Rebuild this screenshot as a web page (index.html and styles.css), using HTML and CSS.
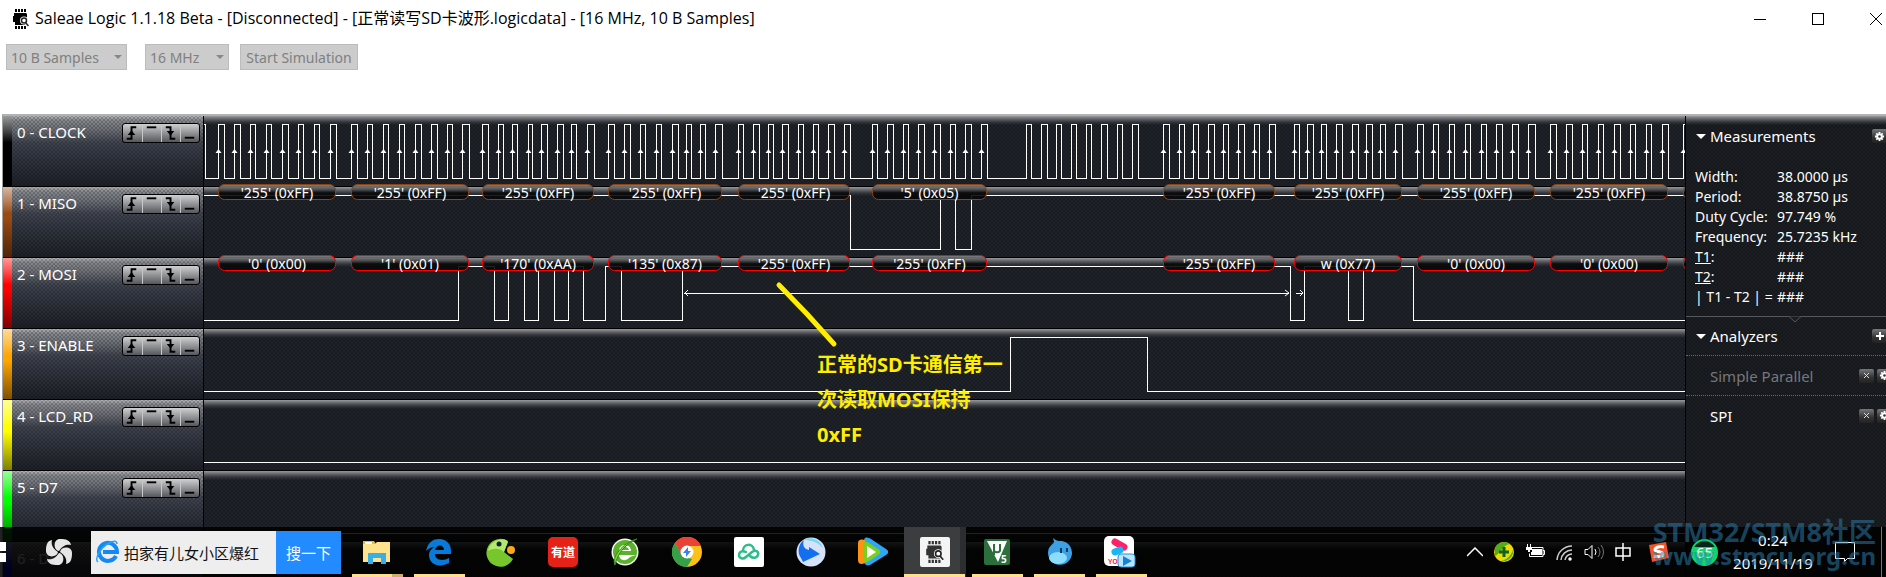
FILE: index.html
```html
<!DOCTYPE html>
<html lang="zh-CN">
<head>
  <meta charset="UTF-8">
  <title>Saleae Logic 1.1.18 Beta</title>
  <meta name="viewport" content="width=device-width, initial-scale=1.0">
  <link rel="stylesheet" href="styles.css">
</head>
<body>

<!-- shared icons -->
<svg class="defs" width="0" height="0" aria-hidden="true">
  <defs>
    <linearGradient id="pill" x1="0" y1="0" x2="0" y2="1">
      <stop offset="0" stop-color="#8c8c8e"/>
      <stop offset="0.35" stop-color="#48484a"/>
      <stop offset="0.55" stop-color="#08080a"/>
      <stop offset="1" stop-color="#08080a"/>
    </linearGradient>
    <symbol id="chip" viewBox="0 0 16 20">
      <path d="M2 0h2v3H2zM5 0h2v3H5zM8 0h2v3H8zM11 0h2v3h-2zM2 17h2v3H2zM5 17h2v3H5zM8 17h2v3H8zM11 17h2v3h-2zM1 4h12l1 1v11H2v-3H0V7h1z"/>
      <circle cx="11" cy="11.500" r="4" fill="#fff"/>
      <path d="M12 13l4 5" stroke="#fff" stroke-width="3"/>
      <circle cx="11" cy="11.500" r="2.500" fill="none" stroke="#222" stroke-width="1.500"/>
      <path d="M12.500 13.500l3 3.500" stroke="#222" stroke-width="1.500"/>
    </symbol>
    <symbol id="gear" viewBox="0 0 12 12">
      <path d="M6 1v10M1 6h10M2.500 2.500l7 7M9.500 2.500l-7 7" stroke="#fff" stroke-width="2"/>
      <circle cx="6" cy="6" r="3.400" fill="#fff"/>
      <circle cx="6" cy="6" r="1.400" fill="#333"/>
    </symbol>
    <symbol id="rise" viewBox="0 0 19 18">
      <path d="M4 15h5V3h5" fill="none" stroke="#000" stroke-width="2"/>
      <path d="M9 6l4 5H5z"/>
    </symbol>
    <symbol id="high" viewBox="0 0 19 18"><path d="M4 3h10" stroke="#000" stroke-width="2"/></symbol>
    <symbol id="fall" viewBox="0 0 19 18">
      <path d="M4 3h5v12h5" fill="none" stroke="#000" stroke-width="2"/>
      <path d="M9 12l4-5H5z"/>
    </symbol>
    <symbol id="low" viewBox="0 0 19 18"><path d="M4 14h10" stroke="#000" stroke-width="2"/></symbol>
  </defs>
</svg>

<header class="titlebar">
  <svg class="app-icon" width="16" height="20"><use href="#chip"/></svg>
  <h1>Saleae Logic 1.1.18 Beta - [Disconnected] - [正常读写SD卡波形.logicdata] - [16 MHz, 10 B Samples]</h1>
  <div class="window-buttons">
    <button aria-label="Minimize"><svg width="12" height="12"><path d="M0 6.500h12" stroke="#000"/></svg></button>
    <button aria-label="Maximize"><svg width="12" height="12"><rect x=".5" y=".5" width="11" height="11" fill="none" stroke="#000"/></svg></button>
    <button aria-label="Close"><svg width="12" height="12"><path d="M0 0l12 12M12 0L0 12" stroke="#000"/></svg></button>
  </div>
</header>

<div class="toolbar">
  <div class="pick samples">
    <select aria-label="Samples" disabled><option>10 B Samples</option></select>
  </div>
  <div class="pick rate">
    <select aria-label="Sample rate" disabled><option>16 MHz</option></select>
  </div>
  <button class="start" disabled>Start Simulation</button>
</div>

<main class="board">
  <div class="channels" id="channels"></div>

  <aside class="sidebar">
    <section class="measurements">
      <div class="panel-head">
        <h2>Measurements</h2>
        <button class="mini" aria-label="Measurement settings"><svg width="11" height="11"><use href="#gear"/></svg></button>
      </div>
      <table>
        <tr><th>Width:</th><td>38.0000 µs</td></tr>
        <tr><th>Period:</th><td>38.8750 µs</td></tr>
        <tr><th>Duty Cycle:</th><td>97.749 %</td></tr>
        <tr><th>Frequency:</th><td>25.7235 kHz</td></tr>
        <tr><th><a href="#t1">T1</a>:</th><td>###</td></tr>
        <tr><th><a href="#t2">T2</a>:</th><td>###</td></tr>
        <tr><th>| T1 - T2 | =</th><td>###</td></tr>
      </table>
      <svg class="notch" width="12" height="7"><path d="M0 .5L6 6L12 .5" fill="#1a1d22" stroke="#55575c"/></svg>
    </section>
    <section class="analyzers">
      <div class="panel-head">
        <h2>Analyzers</h2>
        <button class="mini" aria-label="Add analyzer"><svg width="10" height="10"><path d="M5 1v8M1 5h8" stroke="#fff" stroke-width="2"/></svg></button>
      </div>
      <div class="analyzer off">
        <span>Simple Parallel</span>
        <button class="mini" aria-label="Remove Simple Parallel"><svg width="7" height="7"><path d="M1 1l5 5M6 1L1 6" stroke="#ddd"/></svg></button>
        <button class="mini" aria-label="Simple Parallel settings"><svg width="11" height="11"><use href="#gear"/></svg></button>
      </div>
      <div class="analyzer">
        <span>SPI</span>
        <button class="mini" aria-label="Remove SPI"><svg width="7" height="7"><path d="M1 1l5 5M6 1L1 6" stroke="#ddd"/></svg></button>
        <button class="mini" aria-label="SPI settings"><svg width="11" height="11"><use href="#gear"/></svg></button>
      </div>
    </section>
  </aside>

  <!-- hand-drawn note on top of the waves -->
  <svg class="pointer" width="64" height="68"><path d="M4 4L32 33L59 63" fill="none" stroke="#ffee00" stroke-width="5" stroke-linecap="round"/></svg>
  <p class="note">正常的SD卡通信第一<br>次读取MOSI保持<br>0xFF</p>
</main>

<footer class="taskbar">
  <button class="win" aria-label="Start"><svg width="6" height="20" fill="#fff"><path d="M0 0h6v9H0zM0 11h6v9H0z"/></svg></button>
  <button class="pinwheel" aria-label="Pinwheel">
    <svg width="28" height="28" viewBox="0 0 28 28">
      <g fill="#e6e6e6">
        <path id="petal" d="M14 13C8 12 8 1 15 1c6 0 10 1 11 6c-4-1-8 0-12 6z"/>
        <use href="#petal" transform="rotate(90 14 14)"/>
        <use href="#petal" transform="rotate(180 14 14)"/>
        <use href="#petal" transform="rotate(270 14 14)"/>
      </g>
    </svg>
  </button>
  <form class="search">
    <svg width="24" height="24" viewBox="0 0 24 24">
      <path d="M21 16a9 9 0 1 1 1-4H8" fill="none" stroke="#1489f5" stroke-width="4"/>
      <path d="M3 22C-1 19 6 7 14 3c4-2 8-3 8 1" fill="none" stroke="#27a3ff" stroke-width="1.500"/>
    </svg>
    <input type="text" aria-label="Search" value="拍家有儿女小区爆红">
    <button type="button">搜一下</button>
  </form>

  <nav class="tasks">
    <button class="task open stacked" aria-label="File Explorer">
      <svg width="30" height="30" viewBox="0 0 30 30">
        <path d="M1 4h11l2 3h-2H1z" fill="#f4b52c"/><path d="M3 5h7v2H3z" fill="#fff"/>
        <path d="M1 7h12l2-2h13v20H1z" fill="#ffe28c"/>
        <path d="M6 27V16h18v11h-5v-6h-8v6z" fill="#37afe8"/>
      </svg>
    </button>
    <button class="task open" aria-label="Edge">
      <svg width="30" height="30" viewBox="0 0 30 30">
        <path d="M2 14C4 5 9 2 15 2c8 0 12 6 12 12v3H11c0 7 9 7 14 4v5c-9 5-20 2-20-8c0-4 3-7 6-8c-4 0-7 2-9 4zm9-1h9c0-6-8-6-9 0z" fill="#0a7ad8"/>
      </svg>
    </button>
    <button class="task" aria-label="Game">
      <svg width="30" height="30" viewBox="0 0 30 30">
        <path d="M22 4L18 15l9 7A14 14 0 1 1 22 4z" fill="#76c62c"/>
        <path d="M20 3C12 1 3 6 2 14c5-3 12-3 16 1l4-10z" fill="#b4ea6c"/>
        <circle cx="13" cy="7" r="2.500" fill="#123"/><circle cx="25" cy="13" r="4" fill="#f7a81b"/>
      </svg>
    </button>
    <button class="task" aria-label="Youdao"><span class="youdao">有道</span></button>
    <button class="task" aria-label="360 Browser">
      <svg width="30" height="30" viewBox="0 0 30 30">
        <circle cx="15" cy="15" r="13.500" fill="#f2f8ee"/><circle cx="15" cy="15" r="12" fill="#5cb22c"/>
        <path d="M26 18H9c1 7 8 6 11 2M9 14c0-8 12-8 12 0z" fill="#fff"/><path d="M12 13c1-4 6-4 7 0z" fill="#5cb22c"/>
        <path d="M5 28C1 21 12 6 27 2C16 7 8 15 5 28z" fill="#82d446" stroke="#2f8a14"/>
      </svg>
    </button>
    <button class="task" aria-label="Chrome">
      <svg width="30" height="30" viewBox="0 0 30 30">
        <circle cx="15" cy="15" r="15" fill="#fbc116"/>
        <path d="M3 6a15 15 0 0 1 26 3H15l-6 9z" fill="#ea4335"/>
        <path d="M3 6l7 13 10 3-5 8A15 15 0 0 1 3 6z" fill="#34a04a"/>
        <circle cx="15" cy="15" r="6.500" fill="#fff"/><path d="M16 10l-5 6h3v4l5-6h-3z" fill="#3f7ef0"/>
      </svg>
    </button>
    <button class="task" aria-label="Cloud">
      <svg width="30" height="30" viewBox="0 0 30 30">
        <rect width="30" height="30" rx="2" fill="#fff"/>
        <path d="M12 15c-4-2-7 0-7 3s4 5 7 2l6-5c4-3 7 0 6 3s-5 4-8 1M9 14c0-8 10-8 11-1" fill="none" stroke="#2cbd8b" stroke-width="2.500" stroke-linecap="round"/>
      </svg>
    </button>
    <button class="task" aria-label="Thunder">
      <svg width="30" height="30" viewBox="0 0 30 30">
        <circle cx="15" cy="15" r="14.500" fill="#d6e2fa"/>
        <path d="M8 3C14-1 24 2 27 11C22 5 15 3 8 3z" fill="#6cdcf2"/>
        <path d="M8 3C2 7 1 16 5 21l2 4L24 17 13 10v3C8 12 6 8 8 3z" fill="#146ff0"/>
      </svg>
    </button>
    <button class="task" aria-label="Tencent Video">
      <svg width="30" height="30" viewBox="0 0 30 30">
        <path d="M6 3c1-4 5-2 7-1l15 10c3 2 3 4 0 6L12 28c-3 1-5 0-6-3z" fill="#2fa6f5"/>
        <path d="M0 6c0-4 4-4 7-3v23c-4 2-7 1-7-3z" fill="#ff9213"/>
        <path d="M5 6c1-3 4-1 6 0l9 6c3 2 3 4 0 6l-9 6c-3 2-6 2-6-2z" fill="#7dcf1e"/>
        <path d="M9 9l9 6-9 6z" fill="#fff"/>
      </svg>
    </button>
    <button class="task open active" aria-label="Saleae Logic"><span class="tile"><svg width="18" height="22"><use href="#chip"/></svg></span></button>
    <button class="task open" aria-label="Keil uVision">
      <svg width="30" height="30" viewBox="0 0 30 30">
        <rect x="2" y="2" width="26" height="26" rx="2" fill="#2c6e3c"/>
        <path d="M5 4h20l-9 21z" fill="#fff"/><path d="M12 18V7v6c0 3 6 3 6 0V7v7" fill="none" stroke="#2c6e3c" stroke-width="2"/>
        <text x="19" y="26" class="glyph">5</text>
      </svg>
    </button>
    <button class="task open" aria-label="Aliwangwang">
      <svg width="30" height="30" viewBox="0 0 30 30">
        <path d="M9 1c3 3 6 3 9 3a12 12 0 1 1-13 7c2-3 5-5 5-6z" fill="#3d9fe4"/>
        <ellipse cx="14" cy="21" rx="9" ry="6" fill="#8cdcfb"/>
        <path d="M17 11v5M23 11v4" stroke="#123a66" stroke-width="2"/>
      </svg>
    </button>
    <button class="task open" aria-label="Youku">
      <svg width="34" height="32" viewBox="0 0 34 32">
        <rect width="30" height="30" rx="5" fill="#fff"/>
        <path d="M11 6l9 5" stroke="#ff1f6b" stroke-width="7" stroke-linecap="round"/>
        <path d="M11 16l5-2" stroke="#19b6f5" stroke-width="7" stroke-linecap="round"/>
        <text x="4" y="28" class="yo">YO</text>
        <rect x="14" y="18" width="17" height="13" rx="3" fill="#bfe4fb" stroke="#2492dd"/>
        <path d="M19 20l9 5-9 5z" fill="#1284e0"/>
      </svg>
    </button>
  </nav>

  <div class="tray">
    <button aria-label="Show hidden icons"><svg width="16" height="10"><path d="M0 9l8-8 8 8" fill="none" stroke="#fff" stroke-width="1.500"/></svg></button>
    <button aria-label="360 Safe"><svg width="20" height="20"><circle cx="10" cy="10" r="10" fill="#efd900"/><path d="M1 6A10 10 0 0 1 16 2C10 2 6 12 1 14zM19 8a10 10 0 0 1-12 11c6-1 10-6 12-11z" fill="#54ac1d"/><path d="M10 5v10M5 10h10" stroke="#0c6420" stroke-width="3"/></svg></button>
    <button aria-label="Battery"><svg width="20" height="16"><path d="M6 3.500h12v9H4.500v-3M18 6.500h1.500v4H18" fill="none" stroke="#fff"/><path d="M7 5h10v6H6V8h1zM1 3h6v3H5v2H3V6H1zM2 0h1v3H2zM5 0h1v3H5z" fill="#fff"/></svg></button>
    <button aria-label="Network"><svg width="17" height="17" fill="none" stroke="#ccc" stroke-width="1.500"><path d="M1 16A15 15 0 0 1 16 2M5 16A11 11 0 0 1 16 6M9 16a7 7 0 0 1 7-6"/><circle cx="14" cy="15" r="1" fill="#fff" stroke="#fff"/></svg></button>
    <button aria-label="Volume"><svg width="20" height="18" fill="none" stroke="#fff"><path d="M1 6.500h3l4-4v13l-4-4H1z"/><path d="M11 6q2 3 0 6"/><path d="M14 4q4 5 0 10M17 2q5 7 0 14" stroke="#777"/></svg></button>
    <button aria-label="Input method"><svg width="16" height="18" fill="none" stroke="#fff" stroke-width="1.500"><path d="M1 5h14v8H1zM8 0v18"/></svg></button>
    <button class="sogou" aria-label="Sogou"><svg width="20" height="20"><path d="M0 3L17 0l3 16-17 4z" fill="#f0532a"/><path d="M15 5c-4-1-9 0-9 3 0 2 8 1 8 4s-6 3-9 2" fill="none" stroke="#fff" stroke-width="3"/></svg></button>
    <span class="badge">65</span>
    <time class="clock" datetime="2019-11-19T00:24"><span>0:24</span><span>2019/11/19</span></time>
    <button class="center" aria-label="Notifications"><svg width="20" height="20"><path d="M.5.5h19v16h-7l-3 3v-3h-9z" fill="none" stroke="#fff"/></svg></button>
  </div>
</footer>

<div class="watermark">
  <p class="forum">STM32/STM8社区</p>
  <p>www.stmcu.org.cn</p>
</div>

<script src="script.js"></script>
</body>
</html>
```
FILE: styles.css
```css
* { margin: 0; padding: 0; box-sizing: border-box; }

html { height: 100%; }

body {
  font-family: "Noto Sans", "Noto Sans CJK SC", sans-serif;
  font-size: 15px;
  height: 100%;
  display: flex;
  flex-direction: column;
  overflow: hidden;
  position: relative;
  background-color: #fff;
  color: #000;
}

button, input, select {
  font: inherit;
  color: inherit;
  border: none;
  background: none;
}

svg { display: block; flex: none; }

.defs { position: absolute; }

/* title bar */
.titlebar {
  display: flex;
  align-items: center;
  flex: none;
  height: 38px;
  padding-left: 13px;
}

.titlebar h1 {
  flex: 1;
  margin-left: 6px;
  font-family: "Open Sans", "Noto Sans CJK SC", sans-serif;
  font-size: 16px;
  font-weight: normal;
  line-height: 22px;
  padding-bottom: 2px;
  white-space: nowrap;
}

.window-buttons {
  display: flex;
  margin-right: -19px;
}

.window-buttons button {
  display: grid;
  place-items: center;
  width: 58px;
  height: 38px;
}

/* toolbar */
.toolbar {
  display: flex;
  align-items: flex-start;
  flex: none;
  height: 76px;
  padding: 6px;
  color: #808080;
  font-size: 14px;
}

.pick { position: relative; }

.pick::after {
  content: "";
  position: absolute;
  right: 5px;
  top: 11px;
  border: 4px solid transparent;
  border-top-color: #888;
}

.pick select, .start {
  height: 26px;
  padding: 0 4px;
  background-color: #ccc;
  border: 1px solid #bcbcbc;
  color: #808080;
  opacity: 1;
  appearance: none;
}

.samples select { width: 121px; }
.rate { margin: 0 11px 0 18px; }
.rate select { width: 84px; }
.start { width: 118px; white-space: nowrap; }

/* board */
.board {
  display: flex;
  flex: 1;
  min-height: 0;
  margin-left: 2px;
  border-top: 2px solid #b0b2b4;
  border-left: 1px solid #a0a0a0;
  position: relative;
  overflow: hidden;
  background-color: #1c1f25;
  color: #fff;
}

.channels {
  flex: 1;
  min-width: 0;
  overflow: hidden;
}

.channel {
  display: flex;
  height: 71px;
  border-bottom: 1px solid #000;
}

.stripe {
  flex: none;
  width: 9px;
  background-image: linear-gradient(rgba(255,255,255,0.6), rgba(255,255,255,0.3) 20%, transparent 38%, transparent 45%, rgba(0,0,0,0.5));
}

.label {
  display: flex;
  align-items: flex-start;
  justify-content: space-between;
  flex: none;
  width: 192px;
  padding: 7px 3px 0 5px;
  border-right: 1px solid #000;
  background-image:
    radial-gradient(circle, rgba(0,0,0,0.2) 1px, transparent 1px),
    radial-gradient(circle, rgba(0,0,0,0.2) 1px, transparent 1px),
    linear-gradient(#b4b5b8, #85888d 6%, #6c6f76 20%, #40444e 38%, #333842 55%, #1d2027);
  background-size: 4px 4px, 4px 4px, auto;
  background-position: 0 0, 2px 2px, 0 0;
}

.label span { line-height: 18px; }

.triggers {
  display: flex;
  height: 20px;
  border: 1px solid #000;
  border-radius: 3px;
  background-image: linear-gradient(#d0d0d2, #98999c 45%, #55575c);
}

.triggers button { width: 19px; }
.triggers button + button { border-left: 1px solid #c8c8ca; }

.wave {
  flex: 1;
  min-width: 0;
  background-color: #1f2229;
  background-image:
    linear-gradient(#98999c, #626468 3px, #33363c 6px, transparent 9px),
    radial-gradient(circle, rgba(0,0,0,0.22) 1px, transparent 1px),
    radial-gradient(circle, rgba(0,0,0,0.22) 1px, transparent 1px);
  background-size: auto, 4px 4px, 4px 4px;
  background-position: 0 0, 0 0, 2px 2px;
}

.wave svg {
  width: 100%;
  height: 70px;
  overflow: visible;
}

.trace {
  fill: none;
  stroke: #fff;
  shape-rendering: crispEdges;
}

.wave text {
  fill: #fff;
  font-size: 14px;
  text-anchor: middle;
}

/* sidebar */
.sidebar {
  flex: none;
  width: 201px;
  position: relative;
  overflow: hidden;
  border-left: 1px solid #000;
  background-color: #1b1e23;
  background-image:
    linear-gradient(#98999c, #626468 3px, #33363c 6px, transparent 9px),
    radial-gradient(circle, rgba(0,0,0,0.22) 1px, transparent 1px),
    radial-gradient(circle, rgba(0,0,0,0.22) 1px, transparent 1px);
  background-size: auto, 4px 4px, 4px 4px;
  background-position: 0 0, 0 0, 2px 2px;
}

.measurements {
  height: 201px;
  border-bottom: 1px solid #55575c;
  position: relative;
}

.notch {
  position: absolute;
  left: 103px;
  bottom: -7px;
}

.panel-head {
  display: flex;
  align-items: center;
  justify-content: space-between;
  height: 40px;
  margin-right: -1px;
  padding-left: 10px;
}

.analyzers .panel-head { height: 38px; }

.panel-head h2 {
  display: flex;
  align-items: center;
  gap: 4px;
  font-size: 15px;
  font-weight: normal;
}

.panel-head h2::before {
  content: "";
  border: 5px solid transparent;
  border-top-color: #fff;
  border-bottom: none;
}

.measurements table {
  margin: 11px 0 0 9px;
  border-collapse: collapse;
  font-size: 14px;
  line-height: 20px;
  white-space: nowrap;
}

.measurements th {
  width: 82px;
  font-weight: normal;
  text-align: left;
}

.measurements a { color: inherit; }

.mini {
  display: grid;
  place-items: center;
  width: 15px;
  height: 14px;
  border-radius: 2px;
  background-image: linear-gradient(#77787b, #333 60%, #222);
}

.analyzer {
  display: flex;
  align-items: center;
  gap: 3px;
  height: 40px;
  margin-right: -6px;
  padding-left: 24px;
  border-top: 1px dotted #66686c;
}

.analyzer span { flex: 1; }
.off { color: #77787b; }

/* note over the waves */
.pointer {
  position: absolute;
  left: 772px;
  top: 165px;
}

.note {
  position: absolute;
  left: 814px;
  top: 231px;
  color: #ffee00;
  font-size: 20px;
  font-weight: bold;
  line-height: 35px;
  white-space: nowrap;
}

/* taskbar */
.taskbar {
  display: flex;
  align-items: center;
  position: absolute;
  left: 0;
  right: 0;
  bottom: 0;
  height: 50px;
  background-color: rgba(0,0,0,0.87);
  color: #fff;
}

.win { width: 45px; }
.pinwheel { width: 46px; }

.search {
  display: flex;
  align-items: center;
  width: 250px;
  height: 43px;
  margin: 0 5px 0 0;
  padding-left: 4px;
  background-color: #eee;
  color: #111;
}

.search input {
  flex: 1;
  min-width: 0;
  margin-left: 5px;
}

.search button {
  width: 65px;
  height: 43px;
  background-color: #228bff;
  color: #fff;
}

.win, .pinwheel, .tasks { height: 50px; }

.tasks { display: flex; }

.task {
  display: grid;
  place-items: center;
  width: 62px;
  height: 50px;
  position: relative;
}

.task::after {
  content: "";
  position: absolute;
  left: 6px;
  bottom: 0;
  width: 51px;
  height: 3px;
}

.open::after { background-color: #ffdf8a; }
.stacked::after { background-image: linear-gradient(to right, #ffdf8a 40px, #cfae6c 40px); }
.active { background-image: linear-gradient(to right, #3c3d3f 56px, #2c2d2f 56px); }
.active::after { left: 0; width: 61px; }

.youdao, .tile {
  display: grid;
  place-items: center;
  width: 30px;
  height: 30px;
  border-radius: 5px;
  background-color: #e62117;
  font-size: 12px;
  font-weight: bold;
}

.tile {
  border-radius: 2px;
  background-color: #f4f4f4;
  fill: #333;
}

.glyph {
  fill: #fff;
  font-size: 10px;
  font-weight: bold;
}

.yo {
  fill: #ff1f6b;
  font-size: 7px;
  font-weight: bold;
}

.tray {
  display: flex;
  align-items: center;
  gap: 11px;
  height: 50px;
  margin-left: auto;
  margin-right: 4px;
  padding-right: 26px;
  border-right: 1px solid #777;
}

.sogou { margin: 0 11px 0 7px; }

.badge {
  width: 27px;
  height: 27px;
  border: 2px solid #0cd66c;
  border-radius: 50%;
  background-image: linear-gradient(#07251a 25%, #0cd66c 25%);
  line-height: 23px;
  text-align: center;
}

.clock {
  display: flex;
  flex-direction: column;
  width: 88px;
  margin-right: 7px;
  text-align: center;
  line-height: 23px;
}

.watermark {
  position: absolute;
  right: 10px;
  bottom: 9px;
  color: rgba(44,124,170,0.55);
  font-size: 24px;
  font-weight: bold;
  line-height: 24px;
  text-align: right;
  pointer-events: none;
}

.forum { font-size: 27px; }
```
FILE: script.js
```js
const NS = "http://www.w3.org/2000/svg";
const START = 204; // time offset of the left edge of the waves
const END = 4000;
const HIGH = 8;
const LOW = 62;

// rise, fall, rise, fall... one line for each byte
const clockBytes = [
  [218,224, 234,240, 250,255, 266,271, 282,288, 298,303, 314,319, 330,336],
  [351,357, 367,372, 383,388, 399,404, 415,421, 431,437, 447,452, 462,469],
  [482,488, 498,503, 512,517, 528,532, 541,547, 557,563, 571,576, 587,594],
  [608,614, 624,630, 640,645, 656,661, 672,678, 686,691, 700,705, 715,722],
  [738,743, 753,759, 768,773, 782,788, 798,803, 813,818, 828,834, 844,850],
  [872,877, 887,893, 903,908, 918,924, 934,940, 950,955, 965,971, 981,987],
  [1026,1031, 1041,1047, 1056,1061, 1071,1076, 1086,1091, 1101,1107, 1117,1122, 1132,1138],
  [1163,1169, 1179,1184, 1193,1198, 1208,1214, 1223,1228, 1238,1244, 1254,1259, 1269,1275],
  [1294,1299, 1307,1313, 1321,1326, 1336,1342, 1352,1358, 1366,1372, 1380,1385, 1395,1402],
  [1417,1423, 1433,1438, 1449,1454, 1465,1470, 1481,1486, 1496,1502, 1512,1518, 1528,1535],
  [1550,1556, 1566,1572, 1582,1587, 1598,1603, 1614,1620, 1630,1635, 1646,1651, 1662,1668],
  [1683,1689]
];
const skipped = 6; // this byte is clocked while ENABLE is high

const frames = [[218,336], [351,469], [482,594], [608,722], [738,850], [872,987],
  [1163,1275], [1294,1402], [1417,1535], [1550,1668], [1683,1801]];

const miso = ["'255' (0xFF)", "'255' (0xFF)", "'255' (0xFF)", "'255' (0xFF)", "'255' (0xFF)", "'5' (0x05)",
  "'255' (0xFF)", "'255' (0xFF)", "'255' (0xFF)", "'255' (0xFF)", ""];
const mosi = ["'0' (0x00)", "'1' (0x01)", "'170' (0xAA)", "'135' (0x87)", "'255' (0xFF)", "'255' (0xFF)",
  "'255' (0xFF)", "w (0x77)", "'0' (0x00)", "'0' (0x00)", ""];

const channels = [
  { name: "0 - CLOCK", color: "#000000", level: 1, edges: [205].concat(clockBytes.flat()), arrows: true },
  { name: "1 - MISO", color: "#9a4a12", level: 1, edges: [850,940, 955,971], bytes: miso, stroke: "#8b4513" },
  { name: "2 - MOSI", color: "#ff0000", level: 0, bytes: mosi, stroke: "#ff0000", measure: true,
    edges: [458,494, 508,524, 538,554, 568,583, 605,621, 682,1290, 1304,1348, 1363,1413] },
  { name: "3 - ENABLE", color: "#ffa500", level: 0, edges: [1010,1147] },
  { name: "4 - LCD_RD", color: "#ffff00", level: 0, edges: [] },
  { name: "5 - D7", color: "#00ff00", level: 0, edges: [] },
  { name: "6 - D6", color: "#0000ff", level: 0, edges: [] }
];

function add(parent, tag, attrs) {
  const el = document.createElementNS(NS, tag);
  for (const key in attrs) el.setAttribute(key, attrs[key]);
  parent.appendChild(el);
  return el;
}

function tracePath(level, edges) {
  let d = `M0 ${level ? HIGH : LOW}`;
  edges.forEach(x => {
    level = 1 - level;
    d += `H${x - START}V${level ? HIGH : LOW}`;
  });
  return d + `H${END}`;
}

function drawChannel(ch) {
  const row = document.createElement("div");
  row.className = "channel";
  row.innerHTML = `
    <div class="stripe" style="background-color: ${ch.color}"></div>
    <div class="label">
      <span>${ch.name}</span>
      <div class="triggers">
        ${["rise", "high", "fall", "low"].map(t =>
          `<button aria-label="${t}"><svg width="18" height="18"><use href="#${t}"/></svg></button>`).join("")}
      </div>
    </div>
    <div class="wave"></div>`;

  const svg = add(row.querySelector(".wave"), "svg", {});
  add(svg, "path", { class: "trace", d: tracePath(ch.level, ch.edges) });

  if (ch.arrows) {
    clockBytes.forEach((byte, i) => {
      if (i === skipped) return;
      for (let n = 0; n < byte.length; n += 2) {
        add(svg, "path", { d: `M${byte[n] - START + 0.5} 33l3 4h-6z`, fill: "#fff" });
      }
    });
  }

  if (ch.bytes) {
    ch.bytes.forEach((text, i) => {
      const x = frames[i][0] - START;
      const w = frames[i][1] - frames[i][0];
      add(svg, "rect", { x: x + 0.5, y: -2.5, width: w - 1, height: 15, rx: 6, fill: "url(#pill)", "fill-opacity": 0.9, stroke: ch.stroke });
      add(svg, "text", { x: x + w / 2, y: 11 }).textContent = text;
    });
  }

  if (ch.measure) {
    add(svg, "path", { class: "trace", d: "M480 35H1085M1092 35H1099" });
    add(svg, "path", { d: "M484 32l-3 3 3 3M1081 32l4 3-4 3M1096 32l3 3-3 3", fill: "none", stroke: "#fff" });
  }

  document.getElementById("channels").appendChild(row);
}

channels.forEach(drawChannel);
```
